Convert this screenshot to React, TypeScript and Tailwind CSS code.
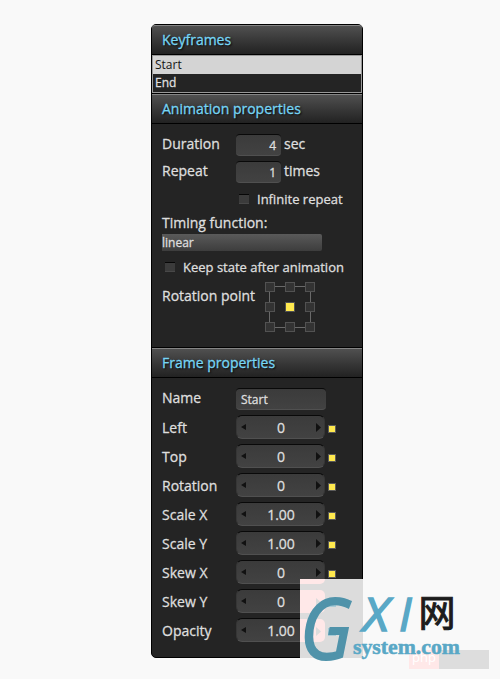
import clsx from "clsx";

const sliders = [
  { label: "Left", value: "0" },
  { label: "Top", value: "0" },
  { label: "Rotation", value: "0" },
  { label: "Scale X", value: "1.00" },
  { label: "Scale Y", value: "1.00" },
  { label: "Skew X", value: "0" },
  { label: "Skew Y", value: "0" },
  { label: "Opacity", value: "1.00" },
];

const field =
  "rounded-[4px] border-t border-b border-t-[#090909] border-b-[#505050] bg-linear-to-b from-[#3b3b3b] to-[#424242]";

function SectionTitle({ children, first }: { children: string; first?: boolean }) {
  return (
    <h2
      className={clsx(
        "h-[30px] border-t border-b border-t-[#858585] border-b-black bg-linear-to-b from-[#505050] to-[#222] pl-[10px] text-[14px] leading-[28px] text-[#76d5f5] [text-shadow:1px_1px_2px_#000]",
        first && "rounded-t-[3px]"
      )}
    >
      {children}
    </h2>
  );
}

function Checkbox() {
  return <span className="h-[10px] w-[10px] border-t border-b border-t-[#070707] border-b-[#484848] bg-[#3b3b3b]" />;
}

function NumberInput({ label, value, unit }: { label: string; value: string; unit: string }) {
  return (
    <div className="flex h-[27px] items-start">
      <span className="w-[74px] leading-[20px]">{label}</span>
      <span className={clsx(field, "h-[22px] w-[45px] pr-[5px] text-right text-[12px] leading-[21px]")}>{value}</span>
      <span className="ml-[3px] leading-[20px]">{unit}</span>
    </div>
  );
}

function Slider({ label, value }: { label: string; value: string }) {
  return (
    <div className="flex h-[29px] items-start">
      <span className="w-[74px] leading-[26px]">{label}</span>
      <span
        className={clsx(
          field,
          "flex h-[24px] w-[89px] items-center justify-between rounded-[6px] border-r border-l border-r-[#363636] border-l-[#363636] pr-[3px] pl-[4px]"
        )}
      >
        <svg className="mb-[1px]" width="5" height="6" viewBox="0 0 5 6">
          <path d="M5 0v6L0 3z" fill="#111" />
        </svg>
        <span className="pt-[2px] leading-[22px]">{value}</span>
        <svg className="mt-[1px]" width="5" height="9" viewBox="0 0 5 9">
          <path d="M0 0v9l5-4.5z" fill="#111" />
        </svg>
      </span>
      <span className="mt-[10px] ml-[3px] h-[8px] w-[8px] border border-[#5b5b5b] bg-[#ffe94e]" />
    </div>
  );
}

function RotationPoint() {
  return (
    <div className="relative ml-[10px] h-[50px] w-[50px]">
      <div className="absolute top-[4px] left-[4px] h-[42px] w-[42px] border border-[#696969]" />
      <div className="relative grid grid-cols-3 gap-[10px]">
        {Array.from({ length: 9 }, (_, i) => (
          <span
            key={i}
            className={clsx("h-[10px] w-[10px] border border-[#525252]", i === 4 ? "bg-[#ffe94e]" : "bg-[#333]")}
          />
        ))}
      </div>
    </div>
  );
}

function Watermark() {
  return (
    <>
      <div className="absolute top-[579px] left-[300px] h-[79px] w-[63px] overflow-hidden bg-[#dcdcdc]">
        <div className="h-[5px] w-[25px] rounded-br-[5px] bg-[#ffe8e8]" />
        <div className="mt-[6px] h-[23px] w-[25px] rounded-r-[5px] bg-[#ffe8e8]" />
        <div className="mt-[6px] h-[23px] w-[25px] rounded-r-[5px] bg-[#ffe8e8]" />
      </div>
      <div className="absolute top-[650px] left-[409px] flex h-[19px] w-[80px] bg-[#dddddd]">
        <span className="h-full w-[30px] bg-[#ffe8e8] text-center text-[13px] leading-[15px] text-white">php</span>
      </div>
      <svg className="absolute top-[579px] left-[295px]" width="205" height="100" viewBox="0 0 205 100">
        <path d="M21 19v9l5-4.5zM21 48v9l5-4.5z" fill="#dcdcdc" />
        <path d="M33 20h8v8h-8zM33 49h8v8h-8z" fill="#a9cbd6" />
        <g fill="#59a8c6" stroke="#59a8c6" fontFamily="'Open Sans', sans-serif" fontStyle="italic">
          <text
            x="5"
            y="80"
            fontSize="85"
            textLength="52"
            lengthAdjust="spacingAndGlyphs"
            fill="#5093aa"
            stroke="#5093aa"
            strokeWidth="2"
          >
            G
          </text>
          <text x="68" y="51.5" fontSize="46" textLength="26" lengthAdjust="spacingAndGlyphs" strokeWidth="1.5">
            X
          </text>
          <text x="104" y="51.5" fontSize="46" strokeWidth="1.5">
            I
          </text>
        </g>
        <text
          x="123.5"
          y="48"
          fontSize="37"
          fontFamily="'Noto Sans CJK SC', sans-serif"
          fill="#1c1c1c"
          stroke="#1c1c1c"
          strokeWidth="1"
        >
          网
        </text>
        <text
          x="58"
          y="75"
          fontSize="20"
          fontWeight="700"
          fontFamily="'Liberation Serif', serif"
          fill="#59a8c6"
          stroke="#59a8c6"
          strokeWidth="0.5"
          textLength="107"
          lengthAdjust="spacingAndGlyphs"
        >
          system.com
        </text>
      </svg>
    </>
  );
}

export default function App() {
  return (
    <div className="relative h-[679px] w-[500px] overflow-hidden bg-[#f9f9f9] pt-[24px] pl-[151px] font-['Open_Sans',sans-serif] text-[14px] text-[#dedede]">
      <div className="h-[634px] w-[212px] rounded-[5px] border border-black bg-[#242424] [-webkit-text-stroke:0.3px_currentColor]">
        <SectionTitle first>Keyframes</SectionTitle>
        <ul className="h-[38px] border border-[#999] text-[12px] leading-[18px]">
          <li className="bg-[#d4d4d4] pl-[2px] text-[#151515] [-webkit-text-stroke:0]">Start</li>
          <li className="h-[18px] pl-[2px]">End</li>
        </ul>
        <div className="border-t border-black">
          <SectionTitle>Animation properties</SectionTitle>
        </div>
        <div className="h-[223px] pt-[10px] pl-[10px]">
          <NumberInput label="Duration" value="4" unit="sec" />
          <NumberInput label="Repeat" value="1" unit="times" />
          <label className="flex h-[22px] items-center gap-[8px] pl-[77px] text-[13px]">
            <Checkbox />
            <span className="pt-[2px]">Infinite repeat</span>
          </label>
          <div className="h-[24px] leading-[26px]">Timing function:</div>
          <div className="h-[17px] w-[160px] rounded-r-[2px] bg-linear-to-b from-[#5a5a5a] to-[#3d3d3d] text-[12px] leading-[17px]">
            linear
          </div>
          <label className="mt-[5px] flex h-[22px] items-center gap-[8px] pl-[3px] text-[13px]">
            <Checkbox />
            <span className="pt-[2px]">Keep state after animation</span>
          </label>
          <div className="mt-[4px] flex">
            <span className="leading-[28px]">Rotation point</span>
            <RotationPoint />
          </div>
        </div>
        <div className="border-t border-black">
          <SectionTitle>Frame properties</SectionTitle>
        </div>
        <div className="pt-[10px] pl-[10px]">
          <div className="flex h-[27px]">
            <span className="w-[74px] leading-[20px]">Name</span>
            <span className={clsx(field, "h-[22px] w-[90px] pl-[5px] text-[12px] leading-[21px]")}>Start</span>
          </div>
          {sliders.map((s) => (
            <Slider key={s.label} {...s} />
          ))}
        </div>
      </div>
      <Watermark />
    </div>
  );
}
